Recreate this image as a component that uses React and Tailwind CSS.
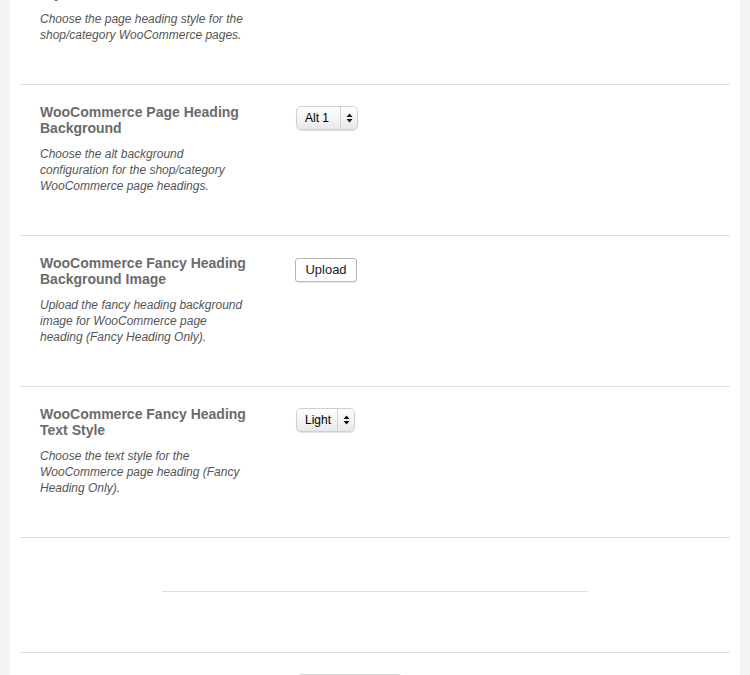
import React from "react";

function Arrows() {
  return (
    <svg width="7" height="10" viewBox="0 0 7 10" className="block">
      <path d="M3.5 0.5 L6.5 4 L0.5 4 Z" fill="#111" />
      <path d="M3.5 9.5 L6.5 6 L0.5 6 Z" fill="#111" />
    </svg>
  );
}

function PopupSelect({ label, width }) {
  return (
    <div
      className={`flex items-stretch h-[24px] ${width} rounded-[5px] border border-[#cfcfcf] bg-gradient-to-b from-white to-[#e9e9e9] shadow-[0_1px_1px_rgba(0,0,0,0.12)]`}
    >
      <div className="flex-1 flex items-center pl-[8px] text-[12px] text-black">{label}</div>
      <div className="w-[17px] border-l border-[#d2d2d2] flex items-center justify-center">
        <Arrows />
      </div>
    </div>
  );
}

function Section({ title, desc, children }) {
  return (
    <div className="flex border-b border-[#dedede] pt-[19px] pb-[41px] px-[20px]">
      <div className="w-[212px] shrink-0">
        <h3 className="text-[14px] leading-[16px] font-bold text-[#6b6b6b]">{title}</h3>
        <p className="mt-[10px] text-[12px] leading-[16px] italic text-[#555]">{desc}</p>
      </div>
      <div className="ml-[44px] pt-[2px]">{children}</div>
    </div>
  );
}

export default function App() {
  return (
    <div
      className="h-[675px] overflow-hidden bg-[#f5f5f5] px-[10px]"
      style={{ fontFamily: '"Liberation Sans", Arial, sans-serif' }}
    >
      <div className="-mt-[50px] h-[725px] bg-white px-[10px]">
        <Section
          title="WooCommerce Page Heading Style"
          desc="Choose the page heading style for the shop/category WooCommerce pages."
        >
          <PopupSelect label="Default" width="w-[70px]" />
        </Section>

        <Section
          title="WooCommerce Page Heading Background"
          desc="Choose the alt background configuration for the shop/category WooCommerce page headings."
        >
          <PopupSelect label="Alt 1" width="w-[62px]" />
        </Section>

        <Section
          title="WooCommerce Fancy Heading Background Image"
          desc="Upload the fancy heading background image for WooCommerce page heading (Fancy Heading Only)."
        >
          <button className="-ml-[1px] h-[24px] w-[62px] rounded-[3px] border border-[#b5b5b5] bg-white text-[13px] text-[#222] shadow-[0_1px_1px_rgba(0,0,0,0.08)]">
            Upload
          </button>
        </Section>

        <Section
          title="WooCommerce Fancy Heading Text Style"
          desc="Choose the text style for the WooCommerce page heading (Fancy Heading Only)."
        >
          <PopupSelect label="Light" width="w-[59px]" />
        </Section>

        <div className="h-[115px] border-b border-[#dedede] flex flex-col items-center pt-[53px]">
          <div className="w-[426px] border-t border-[#dedede]" />
        </div>

        <div className="pt-[21px] pl-[278px]">
          <button className="h-[26px] w-[104px] rounded-[3px] border border-[#d5d5d5] bg-gradient-to-b from-white to-[#eee] text-[13px] text-[#333]">
            Save Changes
          </button>
        </div>
      </div>
    </div>
  );
}
